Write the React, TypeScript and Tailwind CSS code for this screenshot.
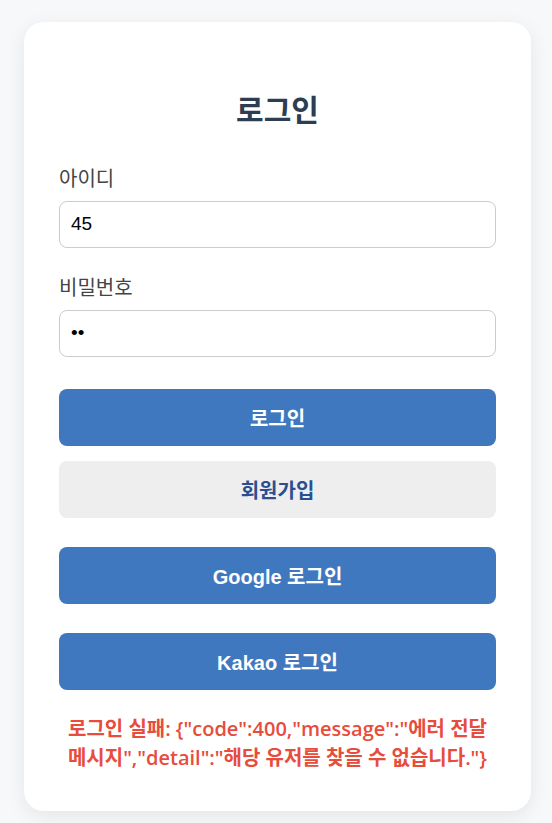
import { useState } from 'react';

const inputClass =
  "mt-2 block h-[47px] w-full rounded-lg border border-[#cccccc] bg-white px-[11px] pb-px text-[19px] text-black outline-none font-['Liberation_Sans','Noto_Sans_CJK_KR',sans-serif]";
const buttonClass =
  "h-[57px] w-full rounded-lg pt-0.5 text-[20px] font-bold font-['Liberation_Sans','Noto_Sans_CJK_KR',sans-serif]";
const primary = 'bg-[#3f78bf] text-white';
const labelClass = 'block text-[20px] leading-7 text-[#444444]';
const errorBody = '{"code":400,"message":"에러 전달 메시지","detail":"해당 유저를 찾을 수 없습니다."}';

export default function App() {
  const [id, setId] = useState('45');
  const [password, setPassword] = useState('45');

  return (
    <main className="min-h-screen bg-[#f7f8fa] pt-[22px] pr-[21px] pb-3 pl-6 font-['Open_Sans','Noto_Sans_CJK_KR',sans-serif]">
      <form
        onSubmit={(e) => e.preventDefault()}
        className="mx-auto max-w-[507px] rounded-[20px] bg-white px-[35px] pt-[66px] pb-[39px] shadow-[0_5px_19px_rgba(0,0,0,0.08)]"
      >
        <h1 className="text-center text-[30px] leading-[44px] font-bold text-[#2c3e50]">로그인</h1>
        <div className="mt-[33px]">
          <label htmlFor="user-id" className={labelClass}>아이디</label>
          <input id="user-id" className={inputClass} value={id} onChange={(e) => setId(e.target.value)} />
        </div>
        <div className="mt-[26px]">
          <label htmlFor="password" className={labelClass}>비밀번호</label>
          <input id="password" type="password" className={inputClass} value={password} onChange={(e) => setPassword(e.target.value)} />
        </div>
        <button type="submit" className={`${buttonClass} ${primary} mt-8`}>로그인</button>
        <button type="button" className={`${buttonClass} mt-[15px] bg-[#eeeeee] text-[#285090]`}>회원가입</button>
        <button type="button" className={`${buttonClass} ${primary} mt-[29px]`}>Google 로그인</button>
        <button type="button" className={`${buttonClass} ${primary} mt-[29px]`}>Kakao 로그인</button>
        <p role="alert" className="mt-6 text-center text-[20px] leading-[29px] font-semibold break-keep text-[#e74c3c]">
          {`로그인 실패: ${errorBody}`}
        </p>
      </form>
    </main>
  );
}
